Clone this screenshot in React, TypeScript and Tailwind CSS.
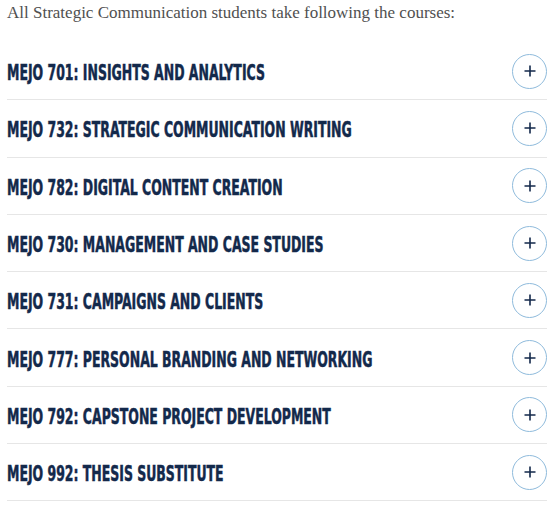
import React from 'react';

const courses = [
  'MEJO 701: INSIGHTS AND ANALYTICS',
  'MEJO 732: STRATEGIC COMMUNICATION WRITING',
  'MEJO 782: DIGITAL CONTENT CREATION',
  'MEJO 730: MANAGEMENT AND CASE STUDIES',
  'MEJO 731: CAMPAIGNS AND CLIENTS',
  'MEJO 777: PERSONAL BRANDING AND NETWORKING',
  'MEJO 792: CAPSTONE PROJECT DEVELOPMENT',
  'MEJO 992: THESIS SUBSTITUTE',
];

const PlusIcon = () => (
  <svg width="12" height="12" viewBox="0 0 12 12" fill="none">
    <path d="M6 0.5v11M0.5 6h11" stroke="#13294b" strokeWidth="1.6" />
  </svg>
);

export default function App() {
  return (
    <div className="bg-white w-[554px] h-[505px] overflow-hidden pl-[7px] pr-[7px]">
      {/* intro line */}
      <p className="text-[17px] leading-[26px] text-[#505050] font-['Liberation_Serif',serif]">
        All Strategic Communication students take following the courses:
      </p>

      {/* course accordion */}
      <ul className="mt-[17px]">
        {courses.map((title) => (
          <li
            key={title}
            className="flex items-center h-[57.3px] border-b border-[#e6e6e6]"
          >
            <div className="flex-1 min-w-0 pt-[5px]">
              <span className="inline-block whitespace-nowrap origin-left scale-x-[0.66] text-[21px] leading-[24px] font-bold text-[#13294b] [-webkit-text-stroke:0.5px_#13294b] font-['DejaVu_Sans_Condensed',sans-serif]">
                {title}
              </span>
            </div>
            <button className="shrink-0 w-[35px] h-[35px] rounded-full border border-[#8fbbdc] flex items-center justify-center">
              <PlusIcon />
            </button>
          </li>
        ))}
      </ul>
    </div>
  );
}
